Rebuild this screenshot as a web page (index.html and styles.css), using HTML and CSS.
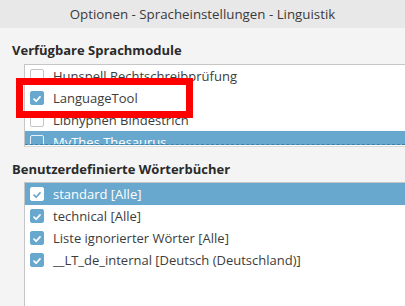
FILE: index.html
```html
<!DOCTYPE html>
<html>
<head>
<meta charset="utf-8">
<link rel="stylesheet" href="styles.css">
</head>
<body>
<div class="titlebar">Optionen - Spracheinstellungen - Linguistik</div>
<div class="content">
  <div class="heading">Verfügbare Sprachmodule</div>
  <div class="list list-modules">
    <div class="row"><span class="cb"></span><span class="label">Hunspell Rechtschreibprüfung</span></div>
    <div class="row"><span class="cb on"><svg viewBox="0 0 14 14"><path d="M3.5 7.2 L6 9.6 L10.5 4.6"/></svg></span><span class="label">LanguageTool</span></div>
    <div class="row"><span class="cb"></span><span class="label">Libhyphen Bindestrich</span></div>
    <div class="row sel focus"><span class="cb"></span><span class="label">MyThes Thesaurus</span></div>
  </div>
  <div class="heading heading2">Benutzerdefinierte Wörterbücher</div>
  <div class="list list-dicts">
    <div class="row sel"><span class="cb on"><svg viewBox="0 0 14 14"><path d="M3.5 7.2 L6 9.6 L10.5 4.6"/></svg></span><span class="label">standard [Alle]</span></div>
    <div class="row"><span class="cb on"><svg viewBox="0 0 14 14"><path d="M3.5 7.2 L6 9.6 L10.5 4.6"/></svg></span><span class="label">technical [Alle]</span></div>
    <div class="row"><span class="cb on"><svg viewBox="0 0 14 14"><path d="M3.5 7.2 L6 9.6 L10.5 4.6"/></svg></span><span class="label">Liste ignorierter Wörter [Alle]</span></div>
    <div class="row"><span class="cb on"><svg viewBox="0 0 14 14"><path d="M3.5 7.2 L6 9.6 L10.5 4.6"/></svg></span><span class="label">__LT_de_internal [Deutsch (Deutschland)]</span></div>
  </div>
</div>
<div class="highlight"></div>
</body>
</html>
```
FILE: styles.css
```css
html, body {
  margin: 0;
  padding: 0;
  width: 405px;
  height: 306px;
  overflow: hidden;
  background: #f4f4f4;
  font-family: "Open Sans", "DejaVu Sans", sans-serif;
  color: #3c3c3c;
  position: relative;
}
.titlebar {
  height: 28px;
  line-height: 28px;
  background: #e8e8e8;
  text-align: center;
  font-size: 13.3px;
  color: #3a3a3a;
}
.content {
  padding-left: 12px;
}
.heading {
  margin-top: 12px;
  height: 20px;
  line-height: 20px;
  font-size: 13px;
  font-weight: bold;
  color: #2a2a2a;
}
.heading2 {
  margin-top: 12px;
}
.list {
  margin-left: 12px;
  background: #fff;
  border-top: 1px solid #c6c6c6;
  border-left: 1px solid #c6c6c6;
  overflow: hidden;
}
.list-modules {
  margin-top: 4px;
  height: 81px;
  border-bottom: 1px solid #d8d8d8;
}
.list-dicts {
  margin-top: 3px;
  height: 124px;
}
.row {
  height: 22px;
  display: flex;
  align-items: center;
  padding-left: 5px;
  font-size: 13px;
  color: #3c3c3c;
  box-sizing: border-box;
}
.row.sel {
  background: #68a8ce;
  color: #fff;
}
.row.focus {
  border-bottom: 1px dashed #3f7ea6;
  height: 14px;
  align-items: flex-start;
  overflow: hidden;
}
.cb {
  width: 14px;
  height: 14px;
  box-sizing: border-box;
  border: 1px solid #c4c4c4;
  border-radius: 2px;
  background: #fff;
  flex: none;
  display: flex;
}
.cb svg {
  width: 14px;
  height: 14px;
}
.cb svg path {
  fill: none;
  stroke: #fff;
  stroke-width: 2;
  stroke-linecap: round;
  stroke-linejoin: round;
}
.cb.on {
  background: #68a8ce;
  border-color: #68a8ce;
}
.sel .cb {
  background: #68a8ce;
  border-color: #e6f0f6;
}
.sel .cb.on {
  background: #fff;
  border-color: #fff;
}
.sel .cb.on svg path {
  stroke: #68a8ce;
}
.label {
  margin-left: 9px;
  white-space: nowrap;
}
.focus .cb {
  margin-top: 4px;
}
.focus .label {
  line-height: 20px;
  margin-top: 1px;
}
.highlight {
  position: absolute;
  left: 16px;
  top: 78px;
  width: 177px;
  height: 40px;
  box-sizing: border-box;
  border: 7px solid #ff0000;
}
```
